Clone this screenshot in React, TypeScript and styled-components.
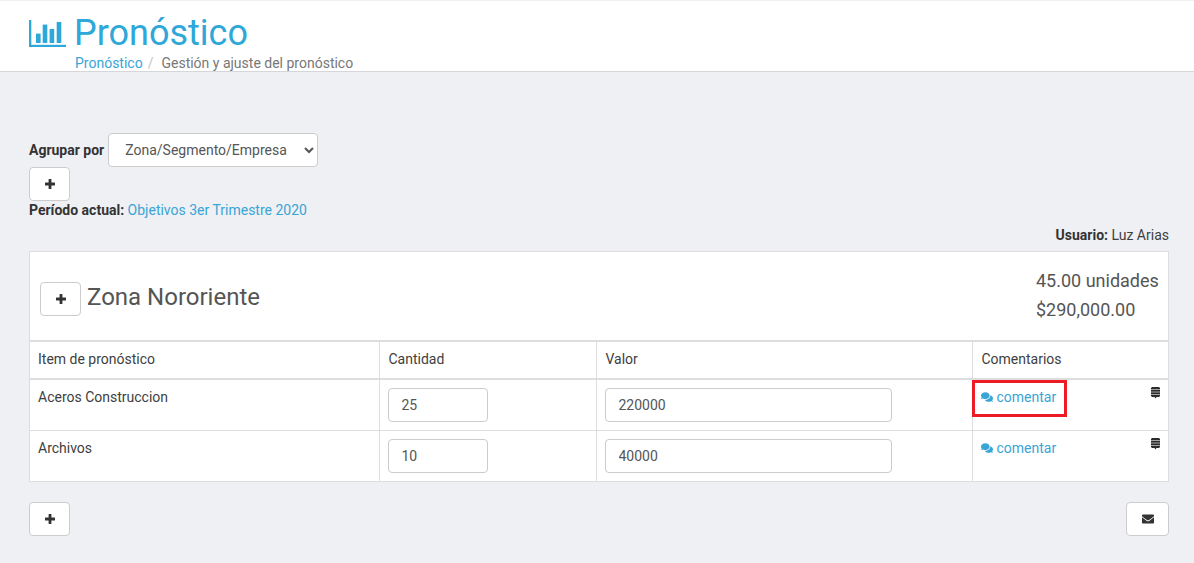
import React from 'react'
import styled, { createGlobalStyle } from 'styled-components'
import { FaComments, FaEnvelope } from 'react-icons/fa'

const GlobalStyle = createGlobalStyle`
	html, body {
		margin: 0;
		background: #eff0f4;
		font-family: Roboto, "Liberation Sans", sans-serif;
		font-size: 14px;
		line-height: 20px;
		color: #3e3e3e;
	}
	* {
		box-sizing: border-box;
	}
`

const ChartIcon = () => (
	<svg width="37" height="27" viewBox="0 0 37 27" fill="#2ea7d9">
		<rect x="0" y="0" width="2.3" height="27" />
		<rect x="0" y="24.8" width="37" height="2.2" />
		<rect x="7" y="13.6" width="4.6" height="9.4" />
		<rect x="13.7" y="4.6" width="4.6" height="18.4" />
		<rect x="20.6" y="9" width="4.6" height="14" />
		<rect x="27.7" y="2" width="4.6" height="21" />
	</svg>
)

const PlusIcon = () => (
	<svg width="10" height="10" viewBox="0 0 10 10" fill="#333">
		<rect x="3.6" y="0" width="2.8" height="10" rx="0.5" />
		<rect x="0" y="3.6" width="10" height="2.8" rx="0.5" />
	</svg>
)

const NoteIcon = () => (
	<svg width="9" height="12" viewBox="0 0 9 12">
		<path d="M1 0h7l1 1v8l-1 1h-2.5l-1 1.4-1-1.4h-2.5l-1-1v-8z" fill="#2b2b2b" />
		<path d="M0 2.5h9M0 5h9M0 7.5h9" stroke="#d8d8d8" strokeWidth="0.7" />
	</svg>
)

const rows = [
	{ item: 'Aceros Construccion', quantity: '25', value: '220000', marked: true },
	{ item: 'Archivos', quantity: '10', value: '40000', marked: false },
]

export default function App() {
	return (
		<>
			<GlobalStyle />
			<Header>
				<TitleRow>
					<ChartIcon />
					<Title>Pronóstico</Title>
				</TitleRow>
				<Breadcrumb>
					<Link>Pronóstico</Link>
					<Slash>/</Slash>
					<Current>Gestión y ajuste del pronóstico</Current>
				</Breadcrumb>
			</Header>
			<Content>
				<GroupRow>
					<Strong>Agrupar por</Strong>
					<Select defaultValue="zona">
						<option value="zona">Zona/Segmento/Empresa</option>
					</Select>
				</GroupRow>
				<Button>
					<PlusIcon />
				</Button>
				<Period>
					<Strong>Período actual:</Strong> <Link>Objetivos 3er Trimestre 2020</Link>
				</Period>
				<User>
					<Strong>Usuario:</Strong> Luz Arias
				</User>
				<Panel>
					<PanelHeader>
						<ZoneName>
							<Button>
								<PlusIcon />
							</Button>
							<ZoneTitle>Zona Nororiente</ZoneTitle>
						</ZoneName>
						<Totals>
							<div>45.00 unidades</div>
							<div>$290,000.00</div>
						</Totals>
					</PanelHeader>
					<Table>
						<colgroup>
							<col style={{ width: 349 }} />
							<col style={{ width: 217 }} />
							<col style={{ width: 376 }} />
							<col />
						</colgroup>
						<thead>
							<tr>
								<Th>Item de pronóstico</Th>
								<Th>Cantidad</Th>
								<Th>Valor</Th>
								<Th>Comentarios</Th>
							</tr>
						</thead>
						<tbody>
							{rows.map(row => (
								<tr key={row.item}>
									<Td>{row.item}</Td>
									<Td>
										<QuantityInput defaultValue={row.quantity} />
									</Td>
									<Td>
										<ValueInput defaultValue={row.value} />
									</Td>
									<Td>
										<CommentLink>
											<FaComments size={12} />
											comentar
										</CommentLink>
										{row.marked && <Highlight />}
										<NoteBadge>
											<NoteIcon />
										</NoteBadge>
									</Td>
								</tr>
							))}
						</tbody>
					</Table>
				</Panel>
				<Footer>
					<Button>
						<PlusIcon />
					</Button>
					<MailButton>
						<FaEnvelope size={12} />
					</MailButton>
				</Footer>
			</Content>
		</>
	)
}

const Header = styled.header`
	height: 72px;
	background: #fff;
	border-top: 1px solid #eff0f4;
	border-bottom: 1px solid #d5d6d9;
	padding: 12px 29px 0;
`

const TitleRow = styled.div`
	display: flex;
	align-items: center;
	gap: 9px;
	height: 40px;
`

const Title = styled.h1`
	margin: 0 0 0 -1px;
	font-size: 36px;
	line-height: 40px;
	font-weight: 400;
	color: #2ea7d9;
`

const Breadcrumb = styled.div`
	display: flex;
	padding-left: 46px;
	line-height: 20px;
`

const Link = styled.a`
	color: #38a5d6;
`

const Slash = styled.span`
	color: #c4c4c4;
	margin: 0 8px 0 5px;
`

const Current = styled.span`
	color: #777;
`

const Content = styled.main`
	padding: 61px 25px 0 29px;
`

const GroupRow = styled.div`
	display: flex;
	align-items: center;
	gap: 4px;
	height: 34px;
`

const Strong = styled.b`
	font-weight: 700;
	color: #333;
`

const Select = styled.select`
	width: 210px;
	height: 34px;
	padding: 0 12px;
	background: #fff;
	border: 1px solid #ccc;
	border-radius: 4px;
	font: inherit;
	color: #555;
`

const Button = styled.button`
	display: flex;
	align-items: center;
	justify-content: center;
	flex: none;
	width: 41px;
	height: 34px;
	margin: 0;
	padding: 0;
	background: #fff;
	border: 1px solid #ccc;
	border-radius: 4px;
	color: #333;
`

const MailButton = styled(Button)`
	width: 43px;
`

const Period = styled.div`
	height: 20px;
	margin-top: -1px;
`

const User = styled.div`
	margin-top: 5px;
	height: 20px;
	text-align: right;
`

const Panel = styled.section`
	margin-top: 6px;
	background: #fff;
	border: 1px solid #ddd;
`

const PanelHeader = styled.div`
	display: flex;
	justify-content: space-between;
	align-items: center;
	height: 88px;
	padding: 0 10px;
`

const ZoneName = styled.div`
	display: flex;
	align-items: center;
	gap: 6px;
	padding-top: 6px;
`

const ZoneTitle = styled.span`
	margin-bottom: 4px;
	font-size: 24px;
	line-height: 26px;
	color: #555;
`

const Totals = styled.div`
	width: 122px;
	margin-top: -3px;
	font-size: 18px;
	line-height: 29px;
	white-space: nowrap;
	color: #555;
`

const Table = styled.table`
	width: 100%;
	table-layout: fixed;
	border-collapse: collapse;
`

const Th = styled.th`
	height: 38px;
	padding: 0 8px 2px 9px;
	border-top: 2px solid #ddd;
	border-bottom: 2px solid #ddd;
	border-left: 1px solid #ddd;
	font-weight: 400;
	text-align: left;
	color: #3e3e3e;

	&:first-child {
		padding-left: 8px;
		border-left: 0;
	}
`

const Td = styled.td`
	position: relative;
	padding: 7px 8px 8px;
	border-top: 1px solid #ddd;
	border-left: 1px solid #ddd;
	vertical-align: top;

	&:first-child {
		border-left: 0;
	}
`

const Input = styled.input`
	display: block;
	height: 34px;
	margin-top: 1px;
	padding: 0 12px 0 13px;
	background: #fff;
	border: 1px solid #ccc;
	border-radius: 4px;
	font: inherit;
	color: #555;
`

const QuantityInput = styled(Input)`
	width: 100px;
`

const ValueInput = styled(Input)`
	width: 287px;
`

const CommentLink = styled.a`
	display: flex;
	align-items: center;
	gap: 4px;
	color: #38a5d6;
`

const Highlight = styled.span`
	position: absolute;
	left: -1px;
	top: 0;
	width: 95px;
	height: 37px;
	border: 3px solid #ed1c24;
`

const NoteBadge = styled.span`
	position: absolute;
	top: 7px;
	right: 8px;
	display: flex;
`

const Footer = styled.div`
	display: flex;
	justify-content: space-between;
	margin-top: 20px;
`
